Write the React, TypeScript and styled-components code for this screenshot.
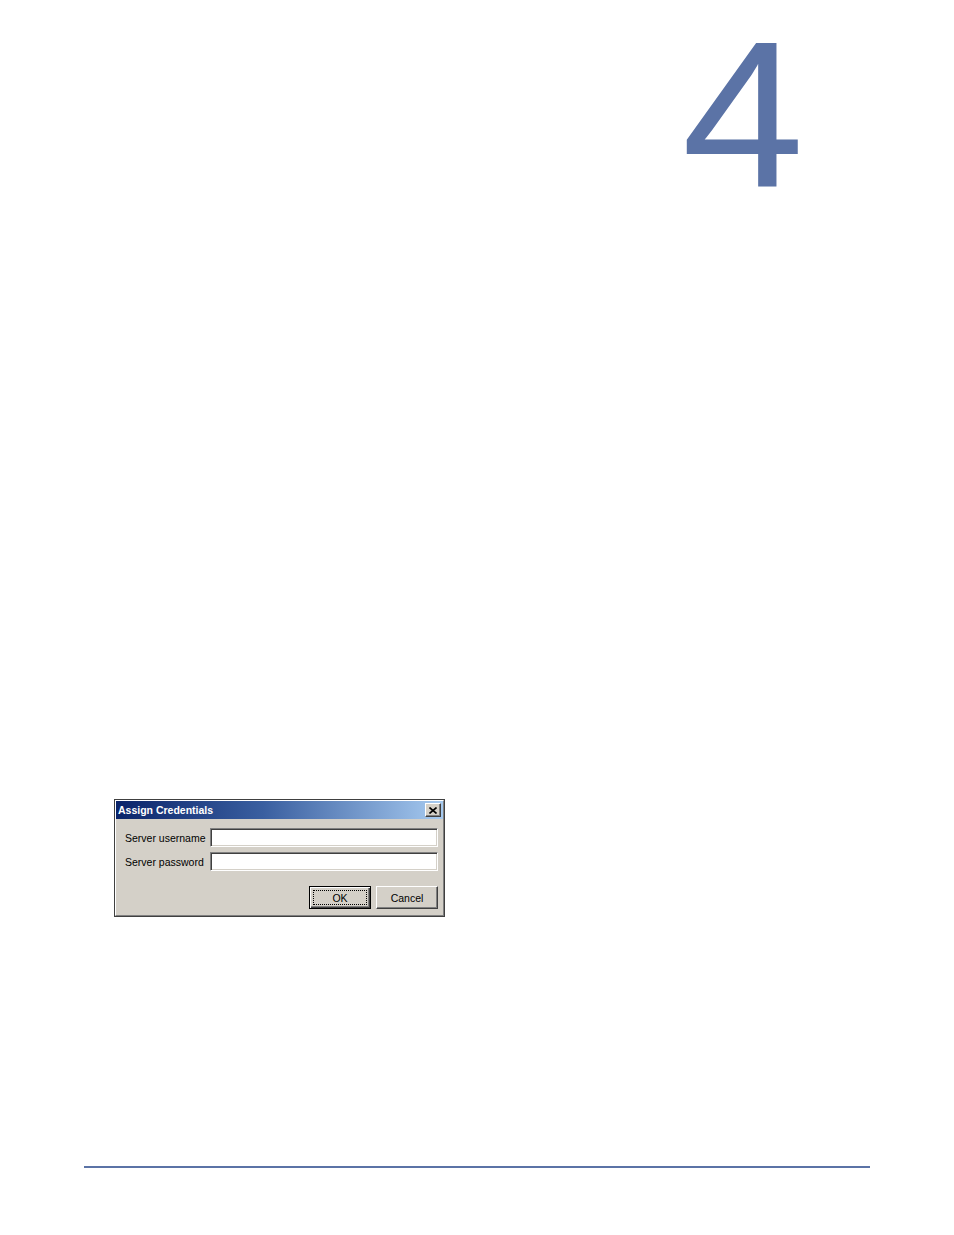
import React from 'react';
import styled, { createGlobalStyle } from 'styled-components';

const GlobalStyle = createGlobalStyle`
  html, body {
    margin: 0;
    padding: 0;
    background: #ffffff;
  }
  body {
    font-family: "Liberation Sans", Arial, sans-serif;
  }
`;

const App = () => {
  return (
    <>
      <GlobalStyle />
      <Page>
        <ChapterHeader>
          <ChapterNumber>4</ChapterNumber>
        </ChapterHeader>

        <Figure>
          <Window>
            <Frame>
              <TitleBar>
                <TitleText>Assign Credentials</TitleText>
                <CloseButton aria-label='Close'>
                  <svg width='8' height='7' viewBox='0 0 8 7'>
                    <path d='M0.5 0.5 L7.5 6.5 M7.5 0.5 L0.5 6.5' stroke='#000' strokeWidth='1.6' fill='none' />
                  </svg>
                </CloseButton>
              </TitleBar>
              <Body>
                <Fields>
                  <Label>Server username</Label>
                  <TextInput type='text' />
                  <Label>Server password</Label>
                  <TextInput type='password' />
                </Fields>
                <Buttons>
                  <Button $default>
                    <Focus>OK</Focus>
                  </Button>
                  <Button>Cancel</Button>
                </Buttons>
              </Body>
            </Frame>
          </Window>
        </Figure>

        <Footer>
          <Rule />
        </Footer>
      </Page>
    </>
  );
};

export default App;

const Page = styled.div`
  width: 954px;
  min-height: 1235px;
  display: flex;
  flex-direction: column;
  box-sizing: border-box;
  padding-top: 11px;
`;

const ChapterHeader = styled.header`
  display: flex;
  justify-content: flex-end;
  padding-right: 150px;
`;

const ChapterNumber = styled.div`
  font-family: "Liberation Sans", Arial, sans-serif;
  font-size: 207px;
  line-height: 207px;
  height: 207px;
  color: #5b73a6;
  transform: scaleX(1.063);
  transform-origin: right center;
`;

const Figure = styled.div`
  margin-top: 581px;
  padding-left: 114px;
`;

const Window = styled.div`
  width: 331px;
  box-sizing: border-box;
  border: 1px solid #404040;
  background: #d4d0c8;
`;

const Frame = styled.div`
  border-top: 1px solid #ffffff;
  border-left: 1px solid #ffffff;
  border-right: 1px solid #808080;
  border-bottom: 1px solid #808080;
`;

const TitleBar = styled.div`
  height: 18px;
  padding: 0 2px;
  display: flex;
  align-items: center;
  justify-content: space-between;
  background: linear-gradient(to right, #0a246a 0%, #3a5fa0 45%, #a6caf0 100%);
`;

const TitleText = styled.span`
  color: #ffffff;
  font-family: "Liberation Sans", Arial, sans-serif;
  font-weight: bold;
  font-size: 10.5px;
`;

const CloseButton = styled.div`
  width: 16px;
  height: 14px;
  box-sizing: border-box;
  background: #d4d0c8;
  border-top: 1px solid #ffffff;
  border-left: 1px solid #ffffff;
  border-right: 1px solid #404040;
  border-bottom: 1px solid #404040;
  box-shadow: inset -1px -1px 0 #808080;
  display: flex;
  align-items: center;
  justify-content: center;
`;

const Body = styled.div`
  padding: 9px 5px 6px 9px;
  display: flex;
  flex-direction: column;
`;

const Fields = styled.div`
  display: grid;
  grid-template-columns: auto 1fr;
  column-gap: 4px;
  row-gap: 5px;
  align-items: center;
`;

const Label = styled.span`
  font-size: 10.5px;
  color: #000000;
  font-family: "Liberation Sans", Arial, sans-serif;
  padding-top: 1px;
`;

const TextInput = styled.input`
  height: 19px;
  box-sizing: border-box;
  margin: 0;
  padding: 0 3px;
  background: #ffffff;
  border-top: 1px solid #808080;
  border-left: 1px solid #808080;
  border-right: 1px solid #ffffff;
  border-bottom: 1px solid #ffffff;
  box-shadow: inset 1px 1px 0 #404040, inset -1px -1px 0 #d4d0c8;
  outline: none;
`;

const Buttons = styled.div`
  display: flex;
  justify-content: flex-end;
  gap: 5px;
  margin-top: 15px;
`;

const Button = styled.div<{ $default?: boolean }>`
  width: 62px;
  height: 23px;
  box-sizing: border-box;
  display: flex;
  align-items: center;
  justify-content: center;
  font-size: 10.5px;
  font-family: "Liberation Sans", Arial, sans-serif;
  color: #000000;
  background: #d4d0c8;
  border: 1px solid ${({ $default }) => ($default ? '#000000' : '#ffffff')};
  ${({ $default }) =>
    $default
      ? 'box-shadow: inset 1px 1px 0 #ffffff, inset -1px -1px 0 #404040, inset -2px -2px 0 #808080;'
      : 'border-right-color: #404040; border-bottom-color: #404040; box-shadow: inset -1px -1px 0 #808080;'}
  padding: 3px;
`;

const Focus = styled.span`
  flex: 1;
  align-self: stretch;
  display: flex;
  align-items: center;
  justify-content: center;
  border: 1px dotted #000000;
`;

const Footer = styled.footer`
  margin-top: auto;
  padding: 0 84px 67px 84px;
`;

const Rule = styled.div`
  height: 2px;
  background: #5b73a6;
`;
